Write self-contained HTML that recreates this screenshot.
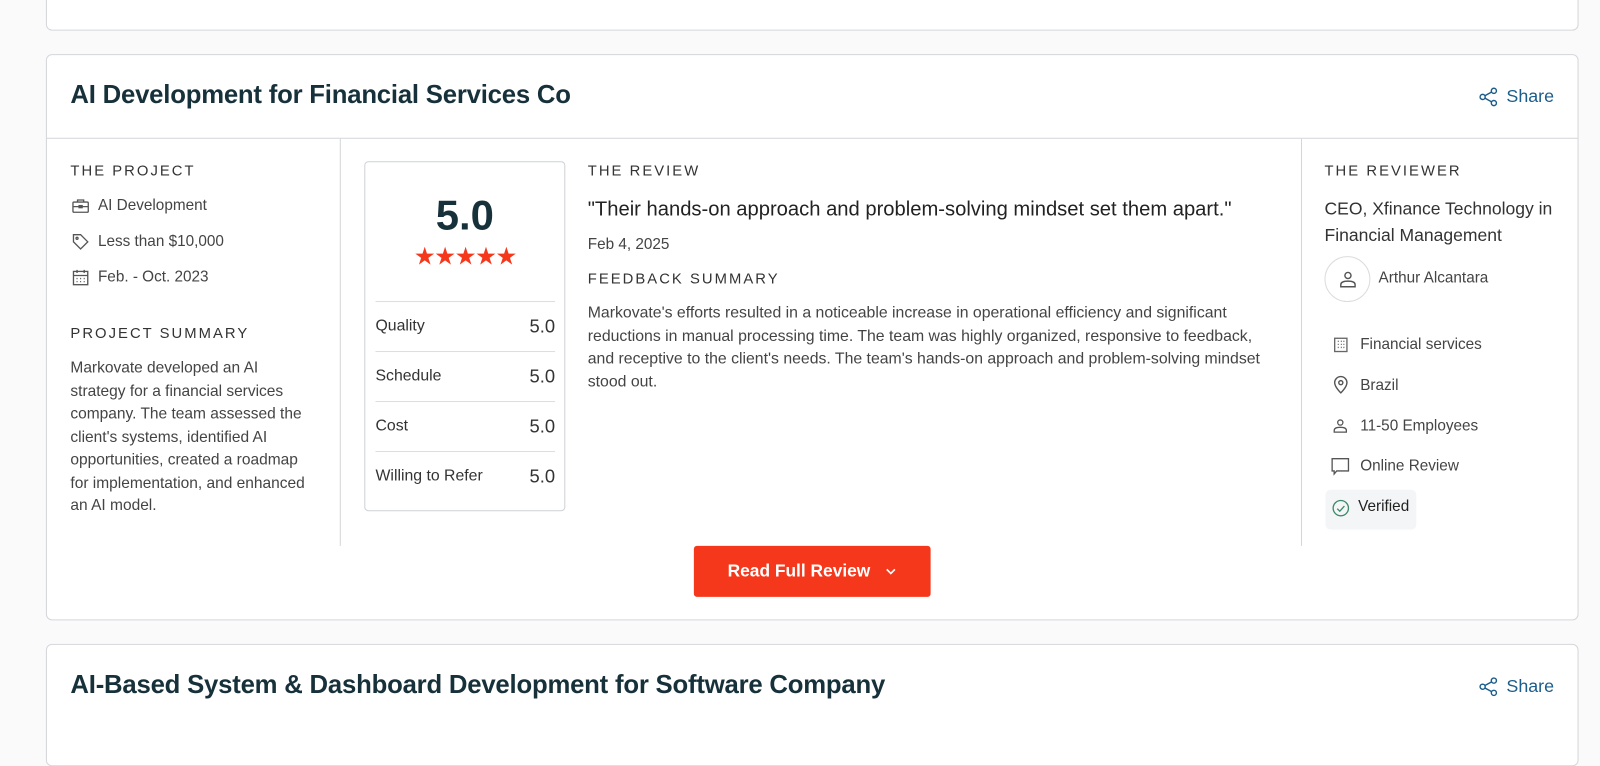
<!DOCTYPE html>
<html><head><style>
*{margin:0;padding:0;box-sizing:border-box}
body{width:1600px;height:727px;overflow:hidden;background:#fafafa;font-family:"Liberation Sans",sans-serif;color:#3e3e3e;position:relative}
#w{position:absolute;left:0;top:0;width:1568px;height:713px;transform:scale(1.0204);transform-origin:0 0}
.card{position:absolute;left:45px;width:1502px;background:#fff;border:1px solid #d4d6da;border-radius:6px}
.title{position:absolute;left:23px;font-size:25.2px;font-weight:bold;color:#17313b;letter-spacing:-0.2px}
.share{position:absolute;right:23px;color:#1b5c8a;font-size:17.5px;display:flex;align-items:center;gap:7px}
.lbl{position:absolute;font-size:14.5px;letter-spacing:2px;color:#333}
.t{position:absolute;font-size:15px;color:#444}
.ico{position:absolute}
.btn{position:absolute;left:634px;width:232px;height:50px;background:#f5381b;border-radius:3px;color:#fff;font-weight:bold;font-size:17px;display:flex;align-items:center;justify-content:center;gap:14px}
.row{position:absolute;left:10px;width:176px;height:49px;border-top:1px solid #ddd;font-size:15.5px;display:flex;justify-content:space-between;align-items:center;color:#333}
.row b{font-weight:normal;font-size:18px;color:#333}
</style></head><body><div id="w">
<div class="card" style="top:-10px;height:40px"><div class="btn" style="top:-30px;height:36px"></div></div>

<div class="card" style="top:53px;height:555px">
 <div class="title" style="top:25px">AI Development for Financial Services Co</div>
 <div class="share" style="top:30px"><svg width="20" height="20" viewBox="0 0 20 20" fill="none" stroke="#1b5c8a" stroke-width="1.4"><circle cx="4" cy="10" r="2.5"/><circle cx="15" cy="4" r="2.5"/><circle cx="15" cy="16" r="2.5"/><path d="M6.2 8.8 12.8 5.2M6.2 11.2 12.8 14.8"/></svg>Share</div>
 <div style="position:absolute;left:0;right:0;top:81px;border-top:1px solid #d4d6da"></div>
 <div style="position:absolute;left:287px;top:82px;height:399px;border-left:1px solid #d4d6da"></div>
 <div style="position:absolute;left:1229px;top:82px;height:399px;border-left:1px solid #d4d6da"></div>

 <div class="lbl" style="left:23px;top:106px">THE PROJECT</div>
 <svg class="ico" style="left:24px;top:139px" width="18" height="18" viewBox="0 0 18 18" fill="none" stroke="#555" stroke-width="1.3"><rect x="1.5" y="5" width="15" height="10" rx="1"/><path d="M6 5V3h6v2M1.5 9.5h15"/><rect x="7.5" y="8.5" width="3" height="2"/></svg>
 <div class="t" style="left:50px;top:139px">AI Development</div>
 <svg class="ico" style="left:24px;top:174px" width="18" height="18" viewBox="0 0 18 18" fill="none" stroke="#555" stroke-width="1.3"><path d="M2 2h7l7 7-7 7-7-7z"/><circle cx="5.5" cy="5.5" r="1"/></svg>
 <div class="t" style="left:50px;top:174px">Less than $10,000</div>
 <svg class="ico" style="left:24px;top:209px" width="18" height="18" viewBox="0 0 18 18" fill="none" stroke="#555" stroke-width="1.3"><rect x="2" y="3" width="14" height="13"/><path d="M2 7h14M5.5 1.5v3M12.5 1.5v3M5 10h1M8.5 10h1M12 10h1M5 13h1M8.5 13h1M12 13h1"/></svg>
 <div class="t" style="left:50px;top:209px">Feb. - Oct. 2023</div>
 <div class="lbl" style="left:23px;top:265px">PROJECT SUMMARY</div>
 <div class="t" style="left:23px;top:296px;width:231px;line-height:22.5px;font-size:15.2px">Markovate developed an AI strategy for a financial services company. The team assessed the client's systems, identified AI opportunities, created a roadmap for implementation, and enhanced an AI model.</div>

 <div style="position:absolute;left:311px;top:104px;width:197px;height:343px;border:1px solid #cfd1d5;border-radius:4px">
  <div style="position:absolute;top:29px;width:100%;text-align:center;font-size:41px;font-weight:bold;color:#17313b">5.0</div>
  <div style="position:absolute;top:78px;width:100%;text-align:center;font-size:24px;color:#f5381b;letter-spacing:-1.5px">★★★★★</div>
  <div class="row" style="top:136px">Quality<b>5.0</b></div>
  <div class="row" style="top:185px">Schedule<b>5.0</b></div>
  <div class="row" style="top:234px">Cost<b>5.0</b></div>
  <div class="row" style="top:283px">Willing to Refer<b>5.0</b></div>
 </div>

 <div class="lbl" style="left:530px;top:106px">THE REVIEW</div>
 <div style="position:absolute;left:530px;top:140px;font-size:19.8px;color:#222">"Their hands-on approach and problem-solving mindset set them apart."</div>
 <div class="t" style="left:530px;top:177px">Feb 4, 2025</div>
 <div class="lbl" style="left:530px;top:212px">FEEDBACK SUMMARY</div>
 <div class="t" style="left:530px;top:242px;width:660px;line-height:22.5px;font-size:15.5px">Markovate's efforts resulted in a noticeable increase in operational efficiency and significant reductions in manual processing time. The team was highly organized, responsive to feedback, and receptive to the client's needs. The team's hands-on approach and problem-solving mindset stood out.</div>

 <div class="lbl" style="left:1252px;top:106px">THE REVIEWER</div>
 <div style="position:absolute;left:1252px;top:137px;font-size:17.2px;line-height:26px;color:#333">CEO, Xfinance Technology in<br>Financial Management</div>
 <div style="position:absolute;left:1252px;top:197px;width:45px;height:45px;border:1px solid #ddd;border-radius:50%"></div>
 <svg class="ico" style="left:1265px;top:210px" width="20" height="20" viewBox="0 0 20 20" fill="none" stroke="#555" stroke-width="1.4"><circle cx="10" cy="6" r="3"/><path d="M3 17v-2c0-2 2-3.5 7-3.5s7 1.5 7 3.5v2z"/></svg>
 <div class="t" style="left:1305px;top:210px">Arthur Alcantara</div>
 <svg class="ico" style="left:1260px;top:276px" width="16" height="16" viewBox="0 0 16 16" fill="none" stroke="#666" stroke-width="1.3"><rect x="2" y="1.5" width="12" height="13"/><path d="M5 4.5h1M8 4.5h1M5 7.5h1M8 7.5h1M5 10.5h1M8 10.5h1M10.5 4.5h1M10.5 7.5h1M10.5 10.5h1"/></svg>
 <div class="t" style="left:1287px;top:275px">Financial services</div>
 <svg class="ico" style="left:1259px;top:314px" width="18" height="18" viewBox="0 0 18 18" fill="none" stroke="#555" stroke-width="1.4"><path d="M9 17s-6-5.5-6-10a6 6 0 0 1 12 0c0 4.5-6 10-6 10z"/><circle cx="9" cy="7" r="2"/></svg>
 <div class="t" style="left:1287px;top:315px">Brazil</div>
 <svg class="ico" style="left:1259px;top:355px" width="17" height="17" viewBox="0 0 20 20" fill="none" stroke="#555" stroke-width="1.5"><circle cx="10" cy="6" r="3"/><path d="M3 17v-2c0-2 2-3.5 7-3.5s7 1.5 7 3.5v2z"/></svg>
 <div class="t" style="left:1287px;top:355px">11-50 Employees</div>
 <svg class="ico" style="left:1258px;top:394px" width="19" height="18" viewBox="0 0 19 18" fill="none" stroke="#555" stroke-width="1.3"><path d="M1.5 1.5h16v12H6l-2.5 3v-3h-2z"/></svg>
 <div class="t" style="left:1287px;top:394px">Online Review</div>
 <div style="position:absolute;left:1253px;top:426px;width:89px;height:39px;background:#f4f5f6;border-radius:5px"></div>
 <svg class="ico" style="left:1259px;top:435px" width="18" height="18" viewBox="0 0 18 18" fill="none" stroke="#3c8a6a" stroke-width="1.3"><circle cx="9" cy="9" r="7.5"/><path d="M5.5 9.5l2.5 2.5 4.5-5"/></svg>
 <div class="t" style="left:1285px;top:434px;color:#222">Verified</div>

 <div class="btn" style="top:481px">Read Full Review <svg width="12" height="8" viewBox="0 0 12 8" fill="none" stroke="#fff" stroke-width="1.6"><path d="M2 2l4 4 4-4"/></svg></div>
</div>

<div class="card" style="top:631px;height:120px">
 <div class="title" style="top:25px">AI-Based System &amp; Dashboard Development for Software Company</div>
 <div class="share" style="top:30px"><svg width="20" height="20" viewBox="0 0 20 20" fill="none" stroke="#1b5c8a" stroke-width="1.4"><circle cx="4" cy="10" r="2.5"/><circle cx="15" cy="4" r="2.5"/><circle cx="15" cy="16" r="2.5"/><path d="M6.2 8.8 12.8 5.2M6.2 11.2 12.8 14.8"/></svg>Share</div>
</div>
</div></body></html>
